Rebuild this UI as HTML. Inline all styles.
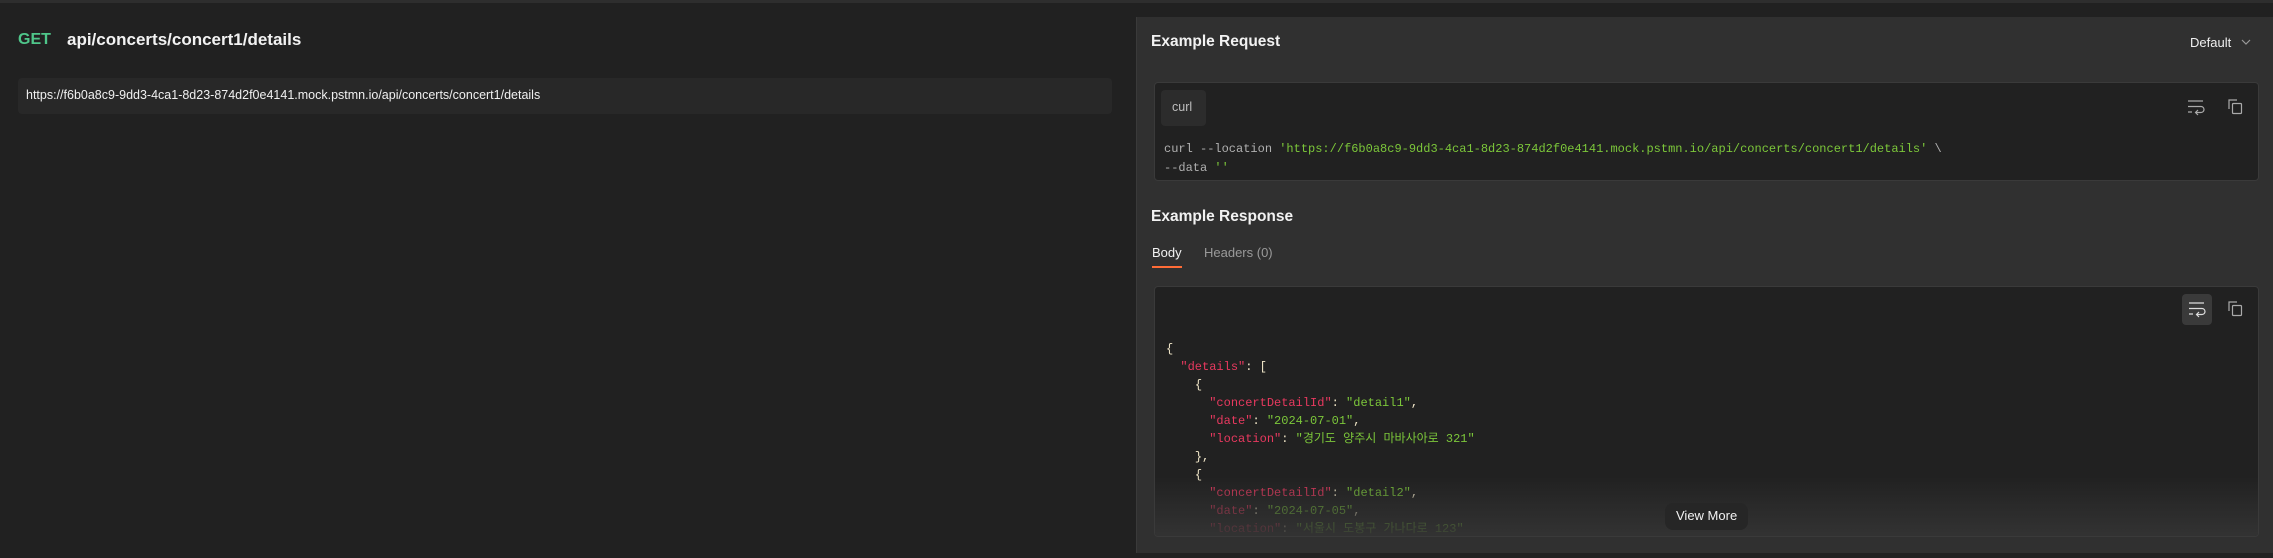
<!DOCTYPE html>
<html><head><meta charset="utf-8"><style>
*{margin:0;padding:0;box-sizing:border-box}
body{width:2273px;height:558px;background:#212121;position:relative;overflow:hidden;font-family:"Liberation Sans","Noto Sans CJK KR",sans-serif;color:#e6e6e6}
.a{position:absolute;white-space:pre}
.mono{font-family:"Liberation Mono","Noto Sans CJK KR",monospace;font-size:12px}
.k{color:#e8395f}.s{color:#7cc73a}.p{color:#f0e6c8}.g{color:#b0b0b0}
</style></head><body>
<div class="a" style="left:0;top:0;width:2273px;height:3px;background:#2e2e2e"></div>
<div class="a" style="left:18px;top:31px;font-size:16px;font-weight:bold;color:#4fc68a">GET</div>
<div class="a" style="left:67px;top:30px;font-size:17px;font-weight:bold;color:#f2f2f2">api/concerts/concert1/details</div>
<div class="a" style="left:18px;top:78px;width:1094px;height:36px;background:#282828;border-radius:4px"></div>
<div class="a" style="left:26px;top:88px;font-size:12.5px;color:#f0f0f0">https://f6b0a8c9-9dd3-4ca1-8d23-874d2f0e4141.mock.pstmn.io/api/concerts/concert1/details</div>

<div class="a" style="left:1136px;top:17px;width:1137px;height:536px;background:#303030;border-left:1px solid #3a3a3a"></div>
<div class="a" style="left:1151px;top:33px;font-size:15.5px;font-weight:bold;color:#f2f2f2">Example Request</div>
<div class="a" style="left:2190px;top:35px;font-size:13px;color:#f0f0f0">Default</div>
<svg class="a" style="left:2240px;top:37px" width="12" height="10" viewBox="0 0 12 10"><path d="M2 3l4 4 4-4" fill="none" stroke="#999" stroke-width="1.2"/></svg>

<div class="a" style="left:1154px;top:82px;width:1105px;height:99px;background:#212121;border:1px solid #3a3a3a;border-radius:4px"></div>
<div class="a" style="left:1161px;top:90px;width:45px;height:36px;background:#2c2c2c;border-radius:4px"></div>
<div class="a" style="left:1172px;top:100px;font-size:12.5px;color:#bdbdbd">curl</div>
<svg class="a" style="left:2186px;top:98px" width="20" height="18" viewBox="0 0 20 18"><path d="M2 3h15M2 8.5h13a3 3 0 0 1 0 6h-5M12 12l-2.5 2.5 2.5 2.5M2 14h4" fill="none" stroke="#aaa" stroke-width="1.2"/></svg>
<svg class="a" style="left:2227px;top:98px" width="18" height="18" viewBox="0 0 18 18"><path d="M2 11V2h8" fill="none" stroke="#aaa" stroke-width="1.2"/><rect x="5.5" y="5.5" width="9" height="10" rx="1" fill="none" stroke="#aaa" stroke-width="1.2"/></svg>
<div class="a mono g" style="left:1164px;top:140px;line-height:19px">curl --location <span class="s">'https://f6b0a8c9-9dd3-4ca1-8d23-874d2f0e4141.mock.pstmn.io/api/concerts/concert1/details'</span> \
--data <span class="s">''</span></div>

<div class="a" style="left:1151px;top:208px;font-size:15.5px;font-weight:bold;color:#f2f2f2">Example Response</div>
<div class="a" style="left:1152px;top:245px;font-size:13px;color:#f2f2f2">Body</div>
<div class="a" style="left:1204px;top:245px;font-size:13px;color:#9a9a9a">Headers (0)</div>
<div class="a" style="left:1152px;top:266px;width:30px;height:2px;background:#ff6c37"></div>

<div class="a" style="left:1154px;top:286px;width:1105px;height:251px;background:#212121;border:1px solid #3a3a3a;border-radius:4px;overflow:hidden">
<div class="a mono" style="left:11px;top:53px;line-height:18px"><span class="p">{</span>
  <span class="k">"details"</span><span class="p">: [</span>
    <span class="p">{</span>
      <span class="k">"concertDetailId"</span><span class="p">: </span><span class="s">"detail1"</span><span class="p">,</span>
      <span class="k">"date"</span><span class="p">: </span><span class="s">"2024-07-01"</span><span class="p">,</span>
      <span class="k">"location"</span><span class="p">: </span><span class="s">"경기도 양주시 마바사아로 321"</span>
    <span class="p">},</span>
    <span class="p">{</span>
      <span class="k">"concertDetailId"</span><span class="p">: </span><span class="s">"detail2"</span><span class="p">,</span>
      <span class="k">"date"</span><span class="p">: </span><span class="s">"2024-07-05"</span><span class="p">,</span>
      <span class="k">"location"</span><span class="p">: </span><span class="s">"서울시 도봉구 가나다로 123"</span></div>
<div class="a" style="left:0;top:190px;width:1105px;height:61px;background:linear-gradient(rgba(48,48,48,0),rgba(48,48,48,0.5) 40%,rgba(52,52,52,0.95))"></div>
</div>
<div class="a" style="left:2182px;top:294px;width:30px;height:31px;background:#3a3a3a;border-radius:4px"></div>
<svg class="a" style="left:2187px;top:300px" width="20" height="18" viewBox="0 0 20 18"><path d="M2 3h15M2 8.5h13a3 3 0 0 1 0 6h-5M12 12l-2.5 2.5 2.5 2.5M2 14h4" fill="none" stroke="#ddd" stroke-width="1.2"/></svg>
<svg class="a" style="left:2227px;top:300px" width="18" height="18" viewBox="0 0 18 18"><path d="M2 11V2h8" fill="none" stroke="#aaa" stroke-width="1.2"/><rect x="5.5" y="5.5" width="9" height="10" rx="1" fill="none" stroke="#aaa" stroke-width="1.2"/></svg>
<div class="a" style="left:1665px;top:503px;width:83px;height:27px;background:#262626;border-radius:8px"></div>
<div class="a" style="left:1676px;top:508px;font-size:13px;color:#f2f2f2">View More</div>
</body></html>
